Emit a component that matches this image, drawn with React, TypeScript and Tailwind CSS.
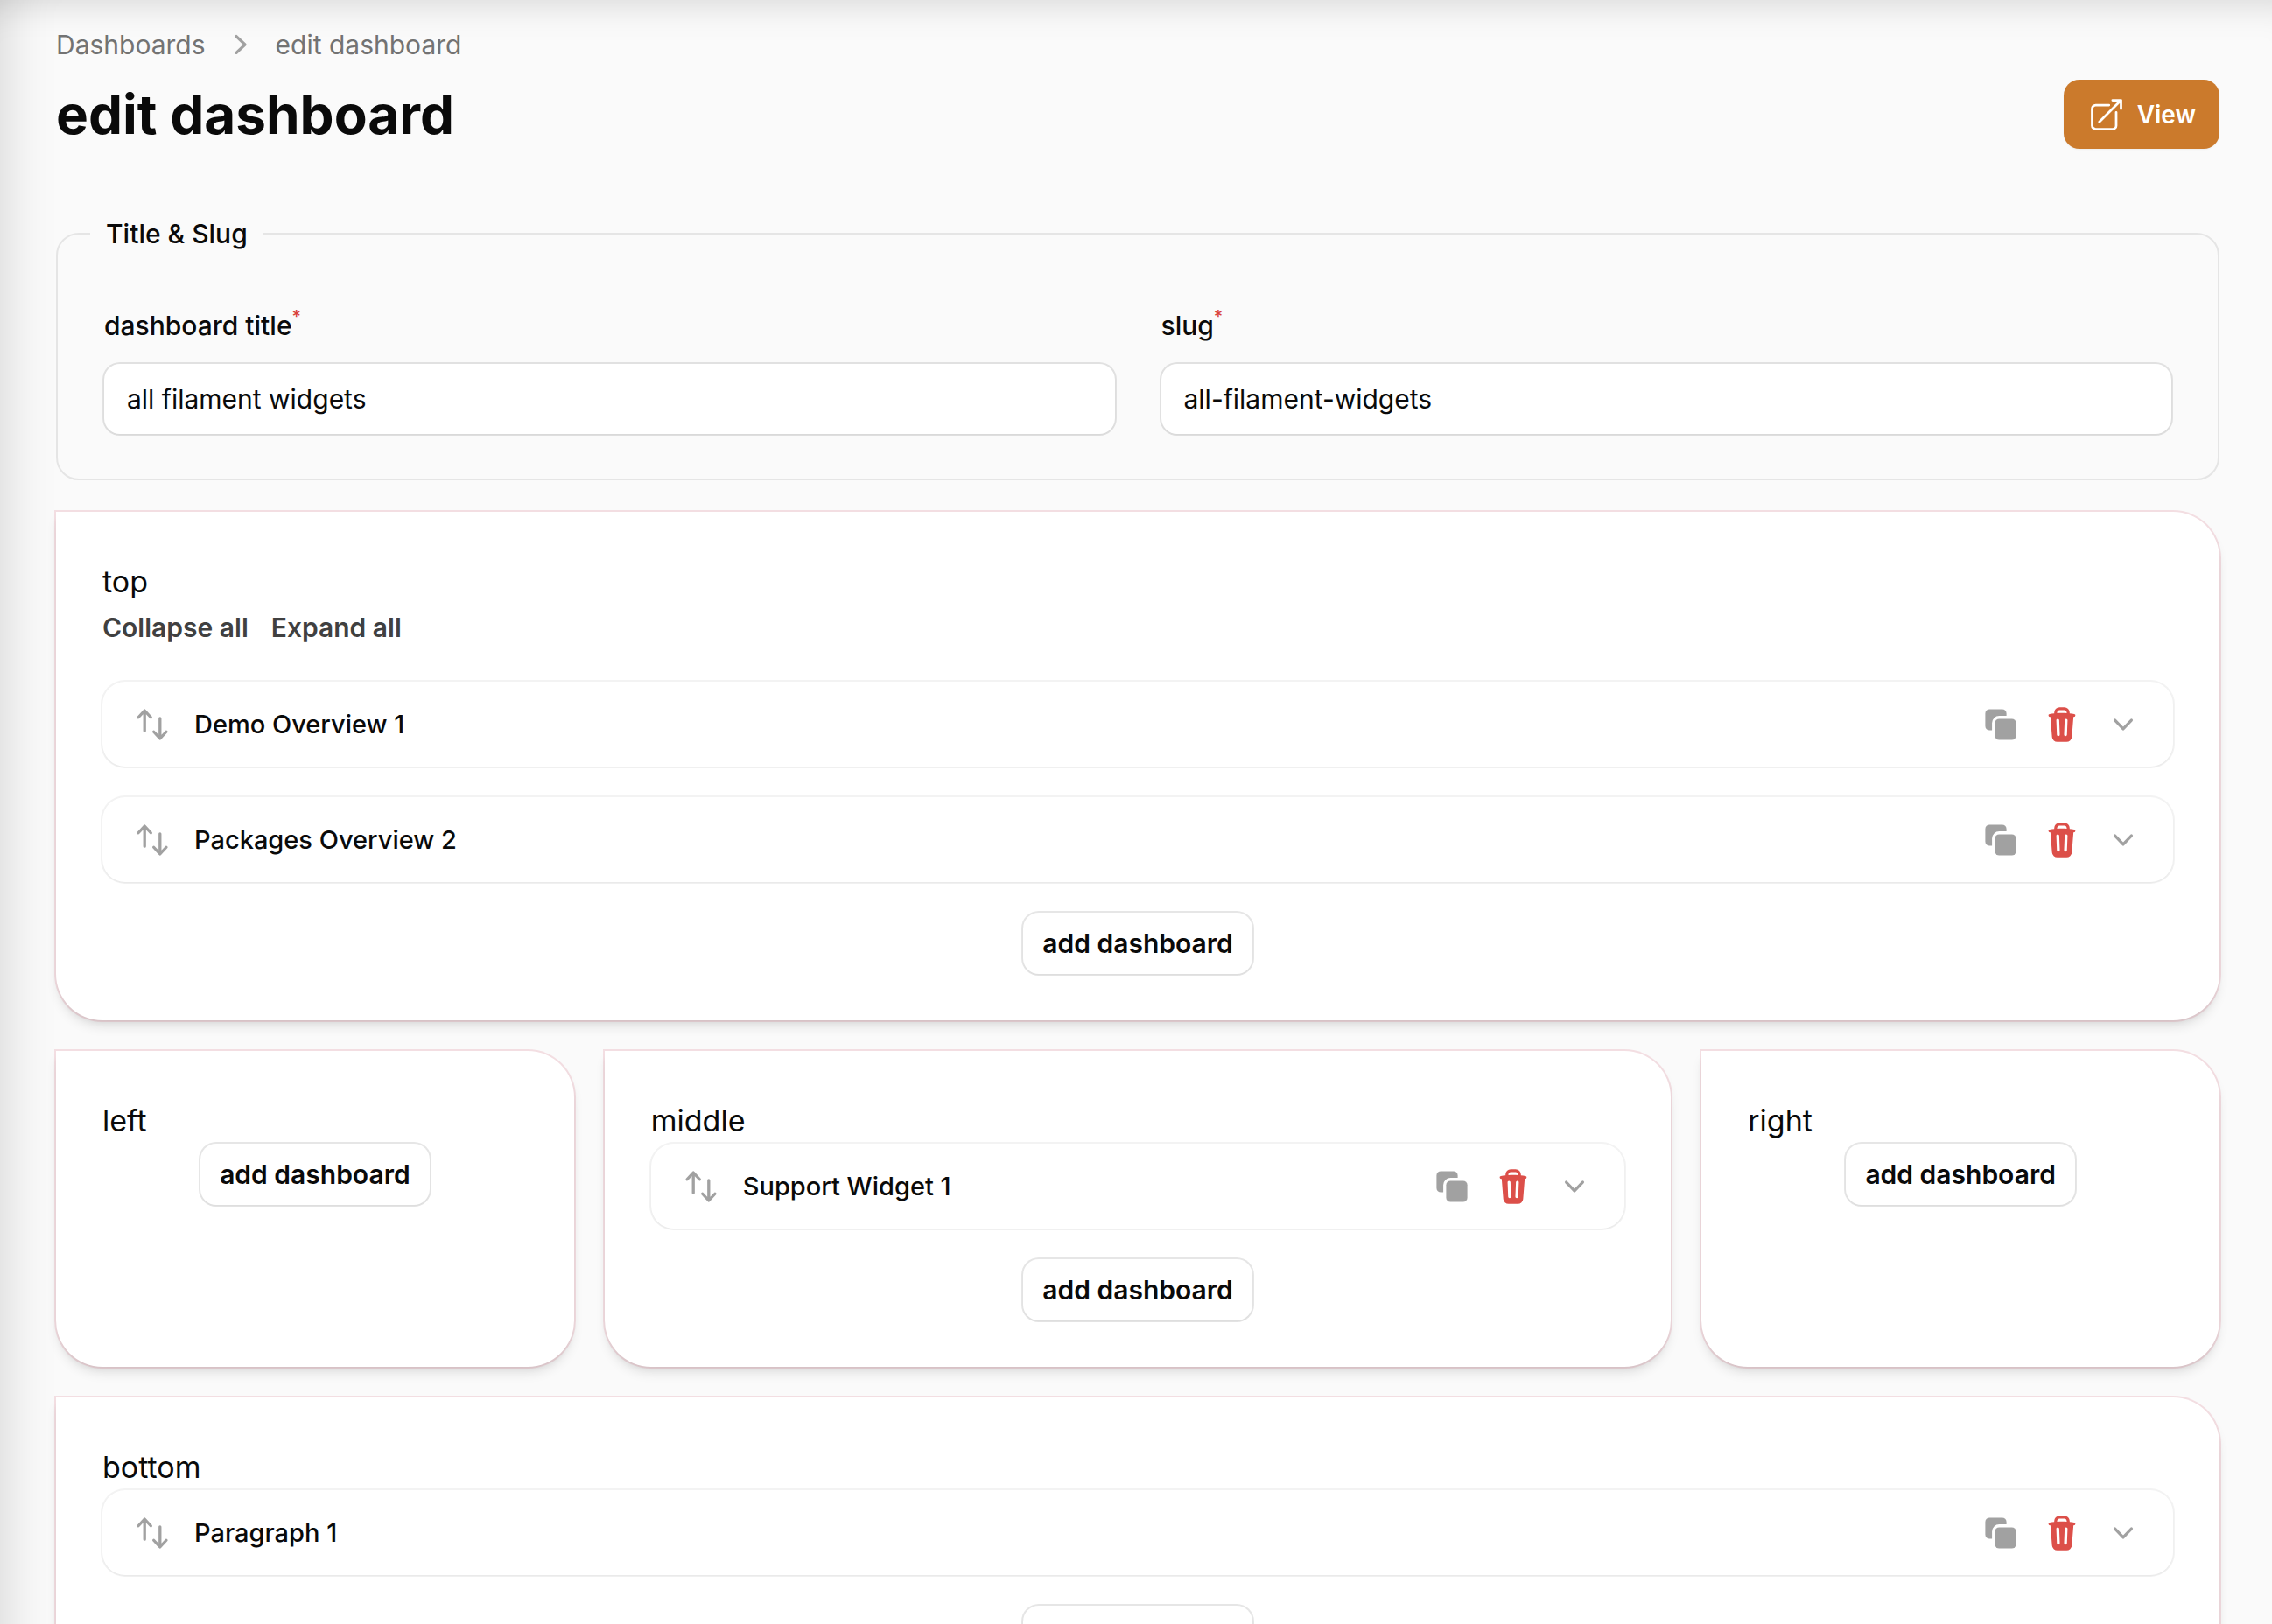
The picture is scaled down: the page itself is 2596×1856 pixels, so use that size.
import React, { useState } from 'react';
import clsx from 'clsx';

interface IconProps {
  className?: string;
  children: React.ReactNode;
}

const MiniIcon: React.FC<IconProps> = ({ className, children }) => (
  <svg viewBox="0 0 20 20" fill="currentColor" aria-hidden="true" className={clsx('size-11 shrink-0', className)}>
    {children}
  </svg>
);

const ChevronRightIcon = () => (
  <MiniIcon className="text-neutral-400">
    <path
      fillRule="evenodd"
      clipRule="evenodd"
      d="M7.21 14.77a.75.75 0 01.02-1.06L11.168 10 7.23 6.29a.75.75 0 111.04-1.08l4.5 4.25a.75.75 0 010 1.08l-4.5 4.25a.75.75 0 01-1.06-.02z"
    />
  </MiniIcon>
);

const ChevronDownIcon = ({ className }: { className?: string }) => (
  <MiniIcon className={className}>
    <path
      fillRule="evenodd"
      clipRule="evenodd"
      d="M5.23 7.21a.75.75 0 011.06.02L10 11.168l3.71-3.938a.75.75 0 111.08 1.04l-4.25 4.5a.75.75 0 01-1.08 0l-4.25-4.5a.75.75 0 01.02-1.06z"
    />
  </MiniIcon>
);

const ArrowsUpDownIcon = () => (
  <MiniIcon>
    <path
      fillRule="evenodd"
      clipRule="evenodd"
      d="M2.24 6.8a.75.75 0 001.06-.04l1.95-2.1v8.59a.75.75 0 001.5 0V4.66l1.95 2.1a.75.75 0 101.1-1.02l-3.25-3.5a.75.75 0 00-1.1 0L2.2 5.74a.75.75 0 00.04 1.06zm8 6.4a.75.75 0 00-.04 1.06l3.25 3.5a.75.75 0 001.1 0l3.25-3.5a.75.75 0 10-1.1-1.02l-1.95 2.1V6.75a.75.75 0 00-1.5 0v8.59l-1.95-2.1a.75.75 0 00-1.06-.04z"
    />
  </MiniIcon>
);

const DuplicateIcon = () => (
  <MiniIcon>
    <path d="M2 4.25A2.25 2.25 0 014.25 2h6.5A2.25 2.25 0 0113 4.25V5.5H9.25A3.75 3.75 0 005.5 9.25V13H4.25A2.25 2.25 0 012 10.75v-6.5z" />
    <path d="M9.25 7A2.25 2.25 0 007 9.25v6.5A2.25 2.25 0 009.25 18h6.5A2.25 2.25 0 0018 15.75v-6.5A2.25 2.25 0 0015.75 7h-6.5z" />
  </MiniIcon>
);

const TrashIcon = () => (
  <MiniIcon>
    <path
      fillRule="evenodd"
      clipRule="evenodd"
      d="M8.75 1A2.75 2.75 0 006 3.75v.443c-.795.077-1.584.176-2.365.298a.75.75 0 10.23 1.482l.149-.022.841 10.518A2.75 2.75 0 007.596 19h4.807a2.75 2.75 0 002.742-2.53l.841-10.52.149.023a.75.75 0 00.23-1.482A41.03 41.03 0 0014 4.193V3.75A2.75 2.75 0 0011.25 1h-2.5zM10 4c.84 0 1.673.025 2.5.075V3.75c0-.69-.56-1.25-1.25-1.25h-2.5c-.69 0-1.25.56-1.25 1.25v.325C8.327 4.025 9.16 4 10 4zM8.58 7.72a.75.75 0 00-1.5.06l.3 7.5a.75.75 0 101.5-.06l-.3-7.5zm4.34.06a.75.75 0 10-1.5-.06l-.3 7.5a.75.75 0 101.5.06l.3-7.5z"
    />
  </MiniIcon>
);

const ExternalLinkIcon = () => (
  <svg
    viewBox="0 0 24 24"
    fill="none"
    stroke="currentColor"
    strokeWidth="1.5"
    strokeLinecap="round"
    strokeLinejoin="round"
    aria-hidden="true"
    className="size-11 shrink-0"
  >
    <path d="M13.5 6H5.25A2.25 2.25 0 003 8.25v10.5A2.25 2.25 0 005.25 21h10.5A2.25 2.25 0 0018 18.75V10.5m-10.5 6L21 3m0 0h-5.25M21 3v5.25" />
  </svg>
);

interface TextFieldProps {
  id: string;
  label: string;
  value: string;
  onChange: (value: string) => void;
}

const TextField: React.FC<TextFieldProps> = ({ id, label, value, onChange }) => (
  <div className="flex flex-col gap-[17px]">
    <label htmlFor={id} className="flex text-[30px] leading-[53px] font-medium">
      {label}
      <span className="text-[20px] leading-8 text-[#d9423c]">*</span>
    </label>
    <input
      id={id}
      type="text"
      required
      value={value}
      onChange={e => onChange(e.target.value)}
      className="h-20 w-full rounded-[18px] bg-white px-[26px] text-[30px] ring-2 ring-neutral-950/10 shadow-xs"
    />
  </div>
);

const BlockItem: React.FC<{ label: string }> = ({ label }) => {
  const [open, setOpen] = useState(false);

  return (
    <li className="flex h-[97px] items-center gap-[26px] rounded-[26px] bg-white px-[35px] text-neutral-400 ring-2 ring-neutral-950/5 shadow-xs">
      <button type="button" aria-label="Move">
        <ArrowsUpDownIcon />
      </button>
      <h4 className="flex-1 truncate text-[29px] leading-[53px] font-medium text-neutral-950">{label}</h4>
      <button type="button" aria-label="Clone">
        <DuplicateIcon />
      </button>
      <button type="button" aria-label="Delete" className="text-[#dc4f49]">
        <TrashIcon />
      </button>
      <button type="button" aria-label="Toggle" aria-expanded={open} onClick={() => setOpen(!open)}>
        <ChevronDownIcon className={open ? 'rotate-180' : undefined} />
      </button>
    </li>
  );
};

interface DropZoneProps {
  name: string;
  items?: string[];
  withToggles?: boolean;
  className?: string;
}

const DropZone: React.FC<DropZoneProps> = ({ name, items = [], withToggles = false, className }) => (
  <section
    className={clsx(
      'rounded-[53px] rounded-tl-none bg-white p-[53px] ring-2 ring-[rgba(200,40,70,0.13)] shadow-[0_9px_13px_-2px_rgba(0,0,0,0.1),0_4px_9px_-4px_rgba(0,0,0,0.1)]',
      className,
    )}
  >
    <h3 className="text-[34px] leading-[53px]">{name}</h3>
    {withToggles && (
      <div className="mb-[35px] flex gap-[26px] text-[30px] leading-[53px] font-semibold text-neutral-700">
        <button type="button">Collapse all</button>
        <button type="button">Expand all</button>
      </div>
    )}
    {items.length > 0 && (
      <ul className="mb-[35px] flex flex-col gap-[35px]">
        {items.map(item => (
          <BlockItem key={item} label={item} />
        ))}
      </ul>
    )}
    <div className="flex justify-center">
      <button
        type="button"
        className="h-[70px] rounded-[18px] bg-white px-[22px] text-[30px] font-semibold ring-2 ring-neutral-950/10 shadow-xs"
      >
        add dashboard
      </button>
    </div>
  </section>
);

const App: React.FC = () => {
  const [title, setTitle] = useState('all filament widgets');
  const [slug, setSlug] = useState('all-filament-widgets');

  return (
    <main className="min-h-screen bg-neutral-50 pt-[29px] pr-[60px] pb-16 pl-16 font-[Inter,sans-serif] text-neutral-950 shadow-[inset_64px_0_64px_-64px_rgba(0,0,0,0.17),inset_0_44px_40px_-40px_rgba(0,0,0,0.15)]">
      {/* Header */}
      <nav aria-label="Breadcrumb">
        <ol className="flex items-center gap-[18px] text-[30px] leading-[44px] text-neutral-500">
          <li>
            <a href="#dashboards">Dashboards</a>
          </li>
          <li className="flex items-center gap-[18px]">
            <ChevronRightIcon />
            <a href="#edit">edit dashboard</a>
          </li>
        </ol>
      </nav>
      <header className="mt-[18px] flex items-center justify-between">
        <h1 className="text-[62px] leading-[79px] font-bold">edit dashboard</h1>
        <a
          href="#view"
          className="flex h-[79px] items-center gap-[13px] rounded-[18px] bg-[#cb7a2c] px-[27px] text-[28px] font-semibold text-white shadow-xs"
        >
          <ExternalLinkIcon />
          View
        </a>
      </header>

      {/* Title & Slug */}
      <fieldset className="mt-[75px] rounded-[26px] border-2 border-neutral-200 px-[53px] pt-[57px] pb-[51px]">
        <legend className="-ml-4 px-[18px] text-[30px] leading-[44px] font-medium">Title &amp; Slug</legend>
        <div className="grid grid-cols-2 gap-[53px]">
          <TextField id="title" label="dashboard title" value={title} onChange={setTitle} />
          <TextField id="slug" label="slug" value={slug} onChange={setSlug} />
        </div>
      </fieldset>

      {/* Layout zones */}
      <div className="mt-9 grid grid-cols-4 gap-[35px]">
        <DropZone
          name="top"
          items={['Demo Overview 1', 'Packages Overview 2']}
          withToggles
          className="col-span-4"
        />
        <DropZone name="left" />
        <DropZone name="middle" items={['Support Widget 1']} className="col-span-2" />
        <DropZone name="right" />
        <DropZone name="bottom" items={['Paragraph 1']} className="col-span-4" />
      </div>
    </main>
  );
};

export default App;
